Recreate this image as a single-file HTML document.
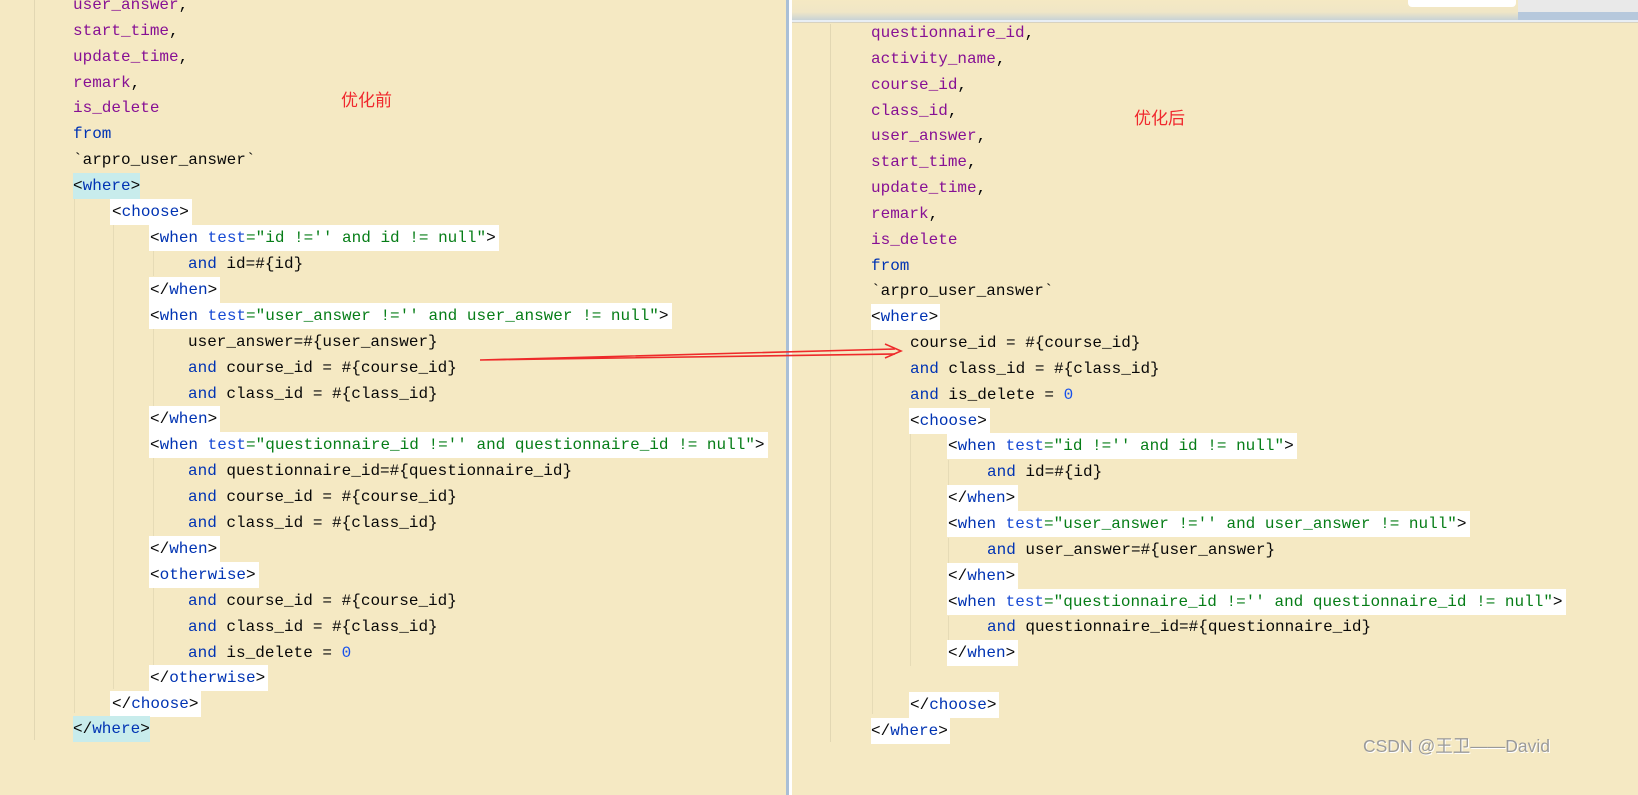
<!DOCTYPE html>
<html><head><meta charset="utf-8">
<style>
*{margin:0;padding:0;box-sizing:border-box}
body{width:1638px;height:795px;overflow:hidden;background:#f5e9c3;position:relative;font-family:"Liberation Mono","DejaVu Sans Mono",monospace;font-size:16px;color:#080808}
.ln{position:absolute;height:26px;line-height:26px;white-space:pre}
.w{background:#fff}
.c{background:#c8ecec}
.p{color:#871094}
.k{color:#0033b3}
.s{color:#067d17}
.n{color:#1750eb}
.a{color:#174ad4}
.g{position:absolute;width:1px;background:#e6dbb6}
.red{position:absolute;color:#f0282d;font-family:"Liberation Sans","Noto Sans CJK SC",sans-serif;font-size:17px}
</style></head><body>
<div class="g" style="left:34px;top:0;height:740px;background:#e2d7b3"></div>
<div class="g" style="left:74px;top:198px;height:515px"></div>
<div class="g" style="left:113px;top:224px;height:465px"></div>
<div class="g" style="left:153px;top:250px;height:26px"></div>
<div class="g" style="left:153px;top:328px;height:78px"></div>
<div class="g" style="left:153px;top:458px;height:78px"></div>
<div class="g" style="left:153px;top:588px;height:78px"></div>

<div style="position:absolute;left:0;top:0">
<div class="ln p" style="left:73px;top:-8px">user_answer<span style="color:#080808">,</span></div>
<div class="ln p" style="left:73px;top:18px">start_time<span style="color:#080808">,</span></div>
<div class="ln p" style="left:73px;top:44px">update_time<span style="color:#080808">,</span></div>
<div class="ln p" style="left:73px;top:70px">remark<span style="color:#080808">,</span></div>
<div class="ln p" style="left:73px;top:95px">is_delete</div>
<div class="ln k" style="left:73px;top:121px">from</div>
<div class="ln" style="left:73px;top:147px">`arpro_user_answer`</div>
<div class="ln c" style="left:73px;top:173px">&lt;<span class="k">where</span>&gt;</div>
<div class="ln w" style="left:110px;top:199px;padding:0 3px 0 2px">&lt;<span class="k">choose</span>&gt;</div>
<div class="ln w" style="left:149px;top:225px;padding:0 3px 0 1px">&lt;<span class="k">when</span> <span class="a">test</span><span class="s">="id !='' and id != null"</span>&gt;</div>
<div class="ln" style="left:188px;top:251px"><span class="k">and</span> id=#{id}</div>
<div class="ln w" style="left:149px;top:277px;padding:0 3px 0 1px">&lt;/<span class="k">when</span>&gt;</div>
<div class="ln w" style="left:149px;top:303px;padding:0 3px 0 1px">&lt;<span class="k">when</span> <span class="a">test</span><span class="s">="user_answer !='' and user_answer != null"</span>&gt;</div>
<div class="ln" style="left:188px;top:329px">user_answer=#{user_answer}</div>
<div class="ln" style="left:188px;top:355px"><span class="k">and</span> course_id = #{course_id}</div>
<div class="ln" style="left:188px;top:381px"><span class="k">and</span> class_id = #{class_id}</div>
<div class="ln w" style="left:149px;top:406px;padding:0 3px 0 1px">&lt;/<span class="k">when</span>&gt;</div>
<div class="ln w" style="left:149px;top:432px;padding:0 3px 0 1px">&lt;<span class="k">when</span> <span class="a">test</span><span class="s">="questionnaire_id !='' and questionnaire_id != null"</span>&gt;</div>
<div class="ln" style="left:188px;top:458px"><span class="k">and</span> questionnaire_id=#{questionnaire_id}</div>
<div class="ln" style="left:188px;top:484px"><span class="k">and</span> course_id = #{course_id}</div>
<div class="ln" style="left:188px;top:510px"><span class="k">and</span> class_id = #{class_id}</div>
<div class="ln w" style="left:149px;top:536px;padding:0 3px 0 1px">&lt;/<span class="k">when</span>&gt;</div>
<div class="ln w" style="left:149px;top:562px;padding:0 3px 0 1px">&lt;<span class="k">otherwise</span>&gt;</div>
<div class="ln" style="left:188px;top:588px"><span class="k">and</span> course_id = #{course_id}</div>
<div class="ln" style="left:188px;top:614px"><span class="k">and</span> class_id = #{class_id}</div>
<div class="ln" style="left:188px;top:640px"><span class="k">and</span> is_delete = <span class="n">0</span></div>
<div class="ln w" style="left:149px;top:665px;padding:0 3px 0 1px">&lt;/<span class="k">otherwise</span>&gt;</div>
<div class="ln w" style="left:110px;top:691px;padding:0 3px 0 2px">&lt;/<span class="k">choose</span>&gt;</div>
<div class="ln c" style="left:73px;top:716px">&lt;/<span class="k">where</span>&gt;</div>
</div>
<div class="red" style="left:341px;top:86px">优化前</div>

<div style="position:absolute;left:786px;top:0;width:6px;height:795px;background:#a9bfd6"></div>
<div style="position:absolute;left:789px;top:0;width:3px;height:795px;background:#fff"></div>
<div style="position:absolute;left:792px;top:0;width:846px;height:20px;background:linear-gradient(#f5e9c3,#f0e6c6 60%,#c9d3d6)"></div>
<div style="position:absolute;left:792px;top:20px;width:846px;height:3px;background:#e8eef4;border-bottom:1px solid #d8d2c0"></div>
<div style="position:absolute;left:1408px;top:0;width:108px;height:7px;background:#fff;border-radius:0 0 4px 4px"></div>
<div style="position:absolute;left:1518px;top:0;width:120px;height:20px;background:#e9e9e9"></div>
<div style="position:absolute;left:1518px;top:12px;width:120px;height:8px;background:#b6c8dc"></div>

<div class="g" style="left:830px;top:24px;height:718px;background:#e2d7b3"></div>
<div class="g" style="left:872px;top:330px;height:384px"></div>
<div class="g" style="left:910px;top:434px;height:232px"></div>
<div class="g" style="left:948px;top:460px;height:26px"></div>
<div class="g" style="left:948px;top:538px;height:26px"></div>
<div class="g" style="left:948px;top:616px;height:26px"></div>

<div class="red" style="left:1134px;top:104px">优化后</div>
<div class="ln p" style="left:871px;top:20px">questionnaire_id<span style="color:#080808">,</span></div>
<div class="ln p" style="left:871px;top:46px">activity_name<span style="color:#080808">,</span></div>
<div class="ln p" style="left:871px;top:72px">course_id<span style="color:#080808">,</span></div>
<div class="ln p" style="left:871px;top:98px">class_id<span style="color:#080808">,</span></div>
<div class="ln p" style="left:871px;top:123px">user_answer<span style="color:#080808">,</span></div>
<div class="ln p" style="left:871px;top:149px">start_time<span style="color:#080808">,</span></div>
<div class="ln p" style="left:871px;top:175px">update_time<span style="color:#080808">,</span></div>
<div class="ln p" style="left:871px;top:201px">remark<span style="color:#080808">,</span></div>
<div class="ln p" style="left:871px;top:227px">is_delete</div>
<div class="ln k" style="left:871px;top:253px">from</div>
<div class="ln" style="left:871px;top:278px">`arpro_user_answer`</div>
<div class="ln w" style="left:871px;top:304px;padding-right:2px">&lt;<span class="k">where</span>&gt;</div>
<div class="ln" style="left:910px;top:330px">course_id = #{course_id}</div>
<div class="ln" style="left:910px;top:356px"><span class="k">and</span> class_id = #{class_id}</div>
<div class="ln" style="left:910px;top:382px"><span class="k">and</span> is_delete = <span class="n">0</span></div>
<div class="ln w" style="left:909px;top:408px;padding:0 3px 0 1px">&lt;<span class="k">choose</span>&gt;</div>
<div class="ln w" style="left:947px;top:433px;padding:0 3px 0 1px">&lt;<span class="k">when</span> <span class="a">test</span><span class="s">="id !='' and id != null"</span>&gt;</div>
<div class="ln" style="left:987px;top:459px"><span class="k">and</span> id=#{id}</div>
<div class="ln w" style="left:947px;top:485px;padding:0 3px 0 1px">&lt;/<span class="k">when</span>&gt;</div>
<div class="ln w" style="left:947px;top:511px;padding:0 3px 0 1px">&lt;<span class="k">when</span> <span class="a">test</span><span class="s">="user_answer !='' and user_answer != null"</span>&gt;</div>
<div class="ln" style="left:987px;top:537px"><span class="k">and</span> user_answer=#{user_answer}</div>
<div class="ln w" style="left:947px;top:563px;padding:0 3px 0 1px">&lt;/<span class="k">when</span>&gt;</div>
<div class="ln w" style="left:947px;top:589px;padding:0 3px 0 1px">&lt;<span class="k">when</span> <span class="a">test</span><span class="s">="questionnaire_id !='' and questionnaire_id != null"</span>&gt;</div>
<div class="ln" style="left:987px;top:614px"><span class="k">and</span> questionnaire_id=#{questionnaire_id}</div>
<div class="ln w" style="left:947px;top:640px;padding:0 3px 0 1px">&lt;/<span class="k">when</span>&gt;</div>
<div class="ln w" style="left:909px;top:692px;padding:0 3px 0 1px">&lt;/<span class="k">choose</span>&gt;</div>
<div class="ln w" style="left:871px;top:718px;padding-right:2px">&lt;/<span class="k">where</span>&gt;</div>

<svg style="position:absolute;left:0;top:0" width="1638" height="795">
<path d="M480 360 L895 349 M480 360 L895 354" stroke="#ee2a2a" stroke-width="1.6" fill="none"/>
<path d="M885 344 L901 351 L885 358" stroke="#ee2a2a" stroke-width="1.6" fill="none"/>
</svg>
<div style="position:absolute;left:1363px;top:733px;font-family:'Liberation Sans','Noto Sans CJK SC',sans-serif;font-size:17.5px;color:#9a9a9a;text-shadow:1px 1px 0 #fff">CSDN @王卫——David</div>
</body></html>
